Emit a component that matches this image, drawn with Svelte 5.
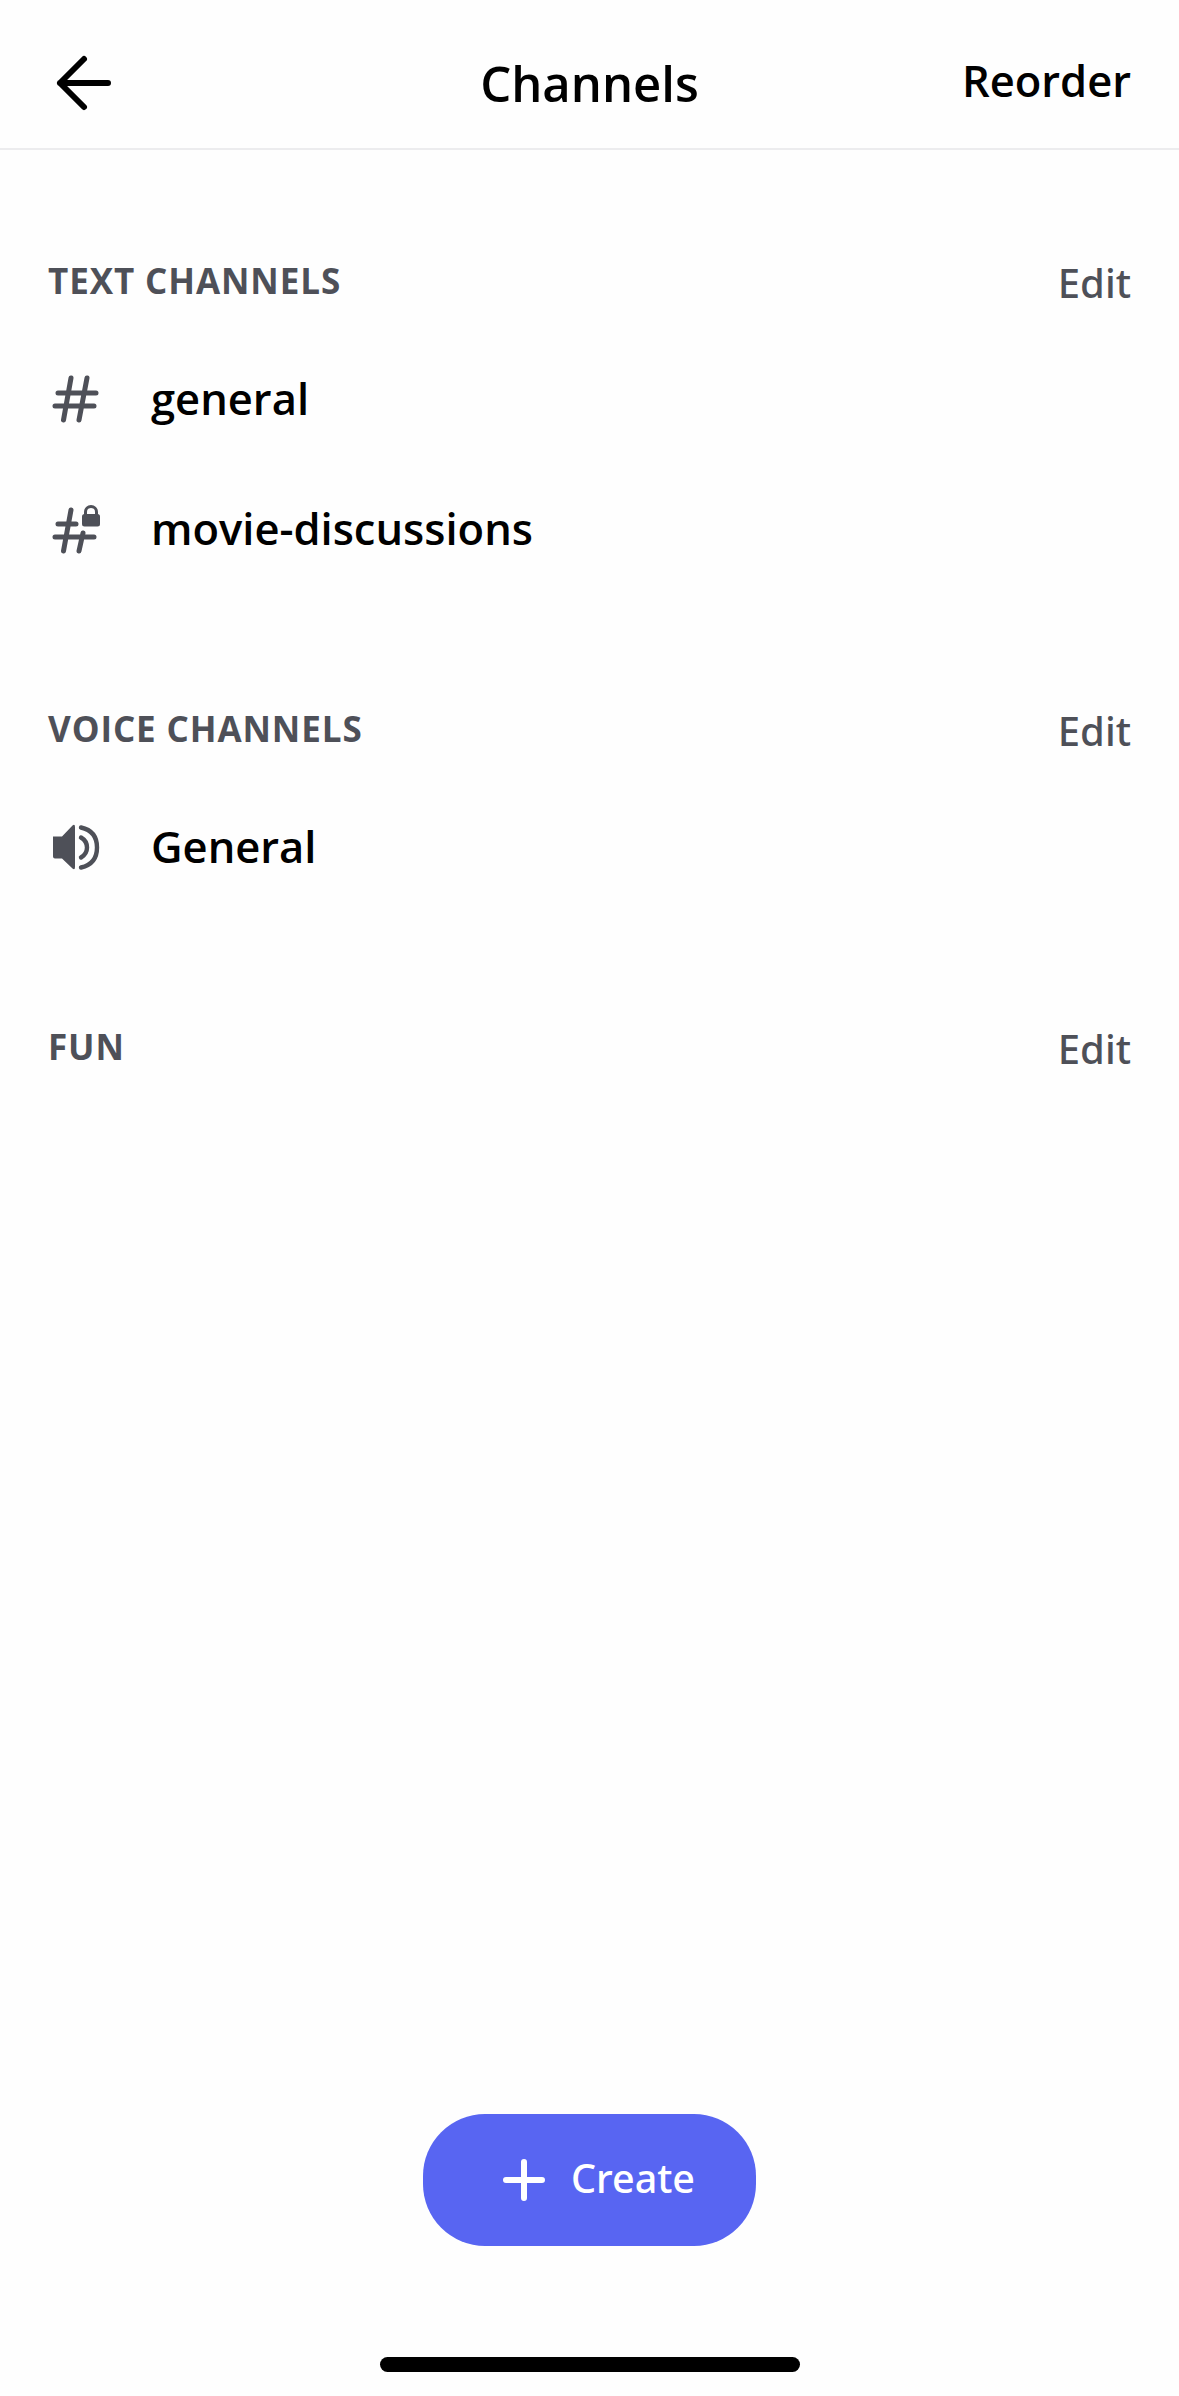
<script>
  const sections = [
    { title: 'TEXT CHANNELS', rows: [{ name: 'general', icon: 'hash' }, { name: 'movie-discussions', icon: 'lock' }] },
    { title: 'VOICE CHANNELS', rows: [{ name: 'General', icon: 'voice' }] },
    { title: 'FUN', rows: [] }
  ];
</script>

<div class="page">
  <header class="top">
    <svg class="back" viewBox="0 0 60 60" width="60" height="60" aria-hidden="true">
      <path d="M30 6 L6 30 L30 54 M6 30 H54" fill="none" stroke="#000" stroke-width="6" stroke-linecap="round" stroke-linejoin="round" />
    </svg>
    <h1>Channels</h1>
    <span class="reorder">Reorder</span>
  </header>

  <main class="list">
    {#each sections as s}
      <section>
        <div class="head">
          <h2>{s.title}</h2>
          <span class="edit">Edit</span>
        </div>
        {#each s.rows as r}
          <div class="row">
            <svg class="ic" viewBox="0 0 60 60" width="60" height="60" aria-hidden="true">
              {#if r.icon === 'hash'}
                <g fill="none" stroke="#4e5058" stroke-width="5" stroke-linecap="round">
                  <path d="M10 23 H48 M7 36 H46 M23 8 L15.5 50 M39 8 L31 50" />
                </g>
              {:else if r.icon === 'lock'}
                <g fill="none" stroke="#4e5058" stroke-width="5" stroke-linecap="round">
                  <path d="M10 24 H28 M7 37 H46 M23 10 L15.5 51 M35 33 L31 51" />
                </g>
                <rect x="34" y="14" width="18" height="12.5" rx="2.5" fill="#4e5058" />
                <path d="M37.5 15 V12 a5.5 5.5 0 0 1 11 0 V15" fill="none" stroke="#4e5058" stroke-width="3" />
              {:else}
                <path d="M5 18.5 H14 L24.5 7.5 Q27 5.5 27 9 V49 Q27 52.5 24.5 50.5 L14 40.5 H7 Q5 40.5 5 38.5 Z" fill="#4e5058" />
                <g fill="none" stroke="#4e5058" stroke-width="4.4" stroke-linecap="round">
                  <path d="M33 19.5 Q39 23 39 29.5 Q39 36 33 39.5" />
                  <path d="M33 9.5 Q49 13 49 29.5 Q49 46 33 49.5" />
                </g>
              {/if}
            </svg>
            <span class="name">{r.name}</span>
          </div>
        {/each}
      </section>
    {/each}
  </main>

  <div class="foot">
    <button class="create">
      <svg viewBox="0 0 42 42" width="42" height="42" aria-hidden="true">
        <path d="M21 3 V39 M3 21 H39" fill="none" stroke="#fff" stroke-width="6" stroke-linecap="round" />
      </svg>
      <span>Create</span>
    </button>
    <div class="home"></div>
  </div>
</div>

<style>
  :global(body) { margin: 0; background: #fff; }
  .page {
    width: 1179px;
    height: 2396px;
    display: flex;
    flex-direction: column;
    font-family: "Open Sans", "Noto Sans", sans-serif;
    background: #fefefe;
    color: #000;
  }
  .top {
    height: 130px;
    border-bottom: 2px solid #ececee;
    display: grid;
    grid-template-columns: 1fr auto 1fr;
    align-items: center;
    padding: 18px 51px 0 51px;
  }
  .back { display: block; margin-left: 3px; }
  h1 { margin: 0; font-size: 49px; font-weight: 600; line-height: 60px; }
  .reorder { justify-self: end; font-size: 43.5px; font-weight: 600; line-height: 60px; margin: -4px -3px 0 0; }
  .list {
    flex: 1;
    padding: 101px 48px 0;
    display: flex;
    flex-direction: column;
    gap: 104px;
  }
  .head {
    height: 60px;
    display: flex;
    align-items: center;
    justify-content: space-between;
    margin-bottom: 24px;
  }
  h2 { margin: 0; font-size: 35px; font-weight: 700; color: #4e5058; line-height: 60px; letter-spacing: 0.9px; }
  .edit { font-family: "Noto Sans", sans-serif; font-size: 40px; font-weight: 500; color: #4e5058; line-height: 60px; padding-top: 3px; }
  .row {
    height: 130px;
    display: flex;
    align-items: center;
    gap: 43px;
  }
  .ic { flex: none; display: block; }
  .name { font-size: 43.5px; font-weight: 600; line-height: 60px; margin-top: -2px; }
  .foot {
    display: flex;
    flex-direction: column;
    align-items: center;
    padding-bottom: 24px;
  }
  .create {
    width: 333px;
    height: 132px;
    margin-bottom: 111px;
    border: 0;
    padding: 0 0 0 19px;
    border-radius: 62px;
    background: #5865f2;
    color: #fff;
    font: inherit;
    font-family: "Noto Sans", sans-serif;
    font-size: 39.5px;
    font-weight: 500;
    line-height: 1;
    display: flex;
    align-items: center;
    justify-content: center;
    gap: 26px;
  }
  .create svg { display: block; }
  .create span { margin-top: -2px; }
  .home { width: 420px; height: 15px; border-radius: 8px; background: #000; }
</style>
